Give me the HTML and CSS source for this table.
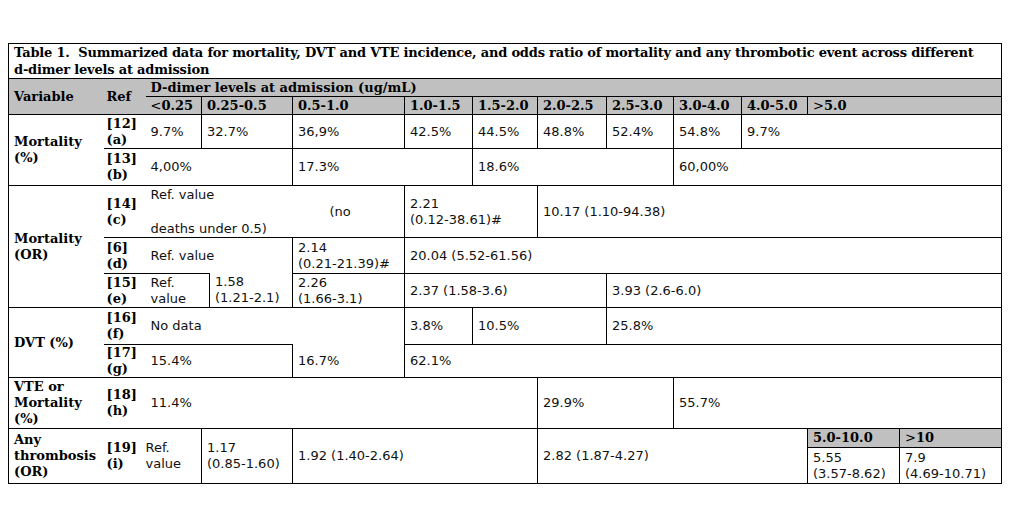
FILE: index.html
```html
<!DOCTYPE html>
<html>
<head>
<meta charset="utf-8">
<link rel="stylesheet" href="styles.css">
<title>Table 1</title>
</head>
<body>
<div class="page">
<table class="tbl">
<colgroup>
<col class="w95"><col class="w42"><col class="w56"><col class="w8"><col class="w83"><col class="w112"><col class="w68"><col class="w65"><col class="w69"><col class="w67"><col class="w68"><col class="w66"><col class="w92"><col class="w102">
</colgroup>
<tr class="r-title">
<td class="title" colspan="14">Table 1.&nbsp; Summarized data for mortality, DVT and VTE incidence, and odds ratio of mortality and any thrombotic event across different<br>d-dimer levels at admission</td>
</tr>
<tr class="r-h1 hd">
<th class="var" rowspan="2">Variable</th>
<th class="ref" rowspan="2">Ref</th>
<th class="dd f" colspan="12">D-dimer levels at admission (ug/mL)</th>
</tr>
<tr class="r-h2 hd">
<th class="f"><span class="lt">&lt;</span>0.25</th>
<th colspan="2">0.25-0.5</th>
<th>0.5-1.0</th>
<th>1.0-1.5</th>
<th>1.5-2.0</th>
<th>2.0-2.5</th>
<th>2.5-3.0</th>
<th>3.0-4.0</th>
<th>4.0-5.0</th>
<th colspan="2"><span class="lt">&gt;</span>5.0</th>
</tr>
<tr class="r-a">
<td class="var" rowspan="2">Mortality<br>(%)</td>
<td class="ref">[12]<br>(a)</td>
<td class="f">9.7%</td>
<td colspan="2">32.7%</td>
<td>36,9%</td>
<td>42.5%</td>
<td>44.5%</td>
<td>48.8%</td>
<td>52.4%</td>
<td>54.8%</td>
<td colspan="3">9.7%</td>
</tr>
<tr class="r-b">
<td class="ref">[13]<br>(b)</td>
<td class="f" colspan="3">4,00%</td>
<td colspan="2">17.3%</td>
<td colspan="3">18.6%</td>
<td colspan="4">60,00%</td>
</tr>
<tr class="r-c">
<td class="var" rowspan="3">Mortality<br>(OR)</td>
<td class="ref">[14]<br>(c)</td>
<td class="f lines" colspan="4"><span class="ln">Ref. value</span><span class="ln no">(no</span><span class="ln">deaths under 0.5)</span></td>
<td colspan="2">2.21<br>(0.12-38.61)#</td>
<td colspan="6">10.17 (1.10-94.38)</td>
</tr>
<tr class="r-d">
<td class="ref">[6]<br>(d)</td>
<td class="f nb" colspan="3">Ref. value</td>
<td>2.14<br>(0.21-21.39)#</td>
<td colspan="8">20.04 (5.52-61.56)</td>
</tr>
<tr class="r-e">
<td class="ref">[15]<br>(e)</td>
<td class="f" colspan="2">Ref.<br>value</td>
<td class="nt">1.58<br>(1.21-2.1)</td>
<td>2.26<br>(1.66-3.1)</td>
<td colspan="3">2.37 (1.58-3.6)</td>
<td colspan="5">3.93 (2.6-6.0)</td>
</tr>
<tr class="r-f">
<td class="var" rowspan="2">DVT (%)</td>
<td class="ref">[16]<br>(f)</td>
<td class="f nb" colspan="4">No data</td>
<td>3.8%</td>
<td colspan="2">10.5%</td>
<td colspan="5">25.8%</td>
</tr>
<tr class="r-g">
<td class="ref">[17]<br>(g)</td>
<td class="f" colspan="3">15.4%</td>
<td class="nt">16.7%</td>
<td colspan="8">62.1%</td>
</tr>
<tr class="r-h">
<td class="var">VTE or<br>Mortality<br>(%)</td>
<td class="ref">[18]<br>(h)</td>
<td class="f" colspan="6">11.4%</td>
<td colspan="2">29.9%</td>
<td colspan="4">55.7%</td>
</tr>
<tr class="r-i1">
<td class="var" rowspan="2">Any<br>thrombosis<br>(OR)</td>
<td class="ref" rowspan="2">[19]<br>(i)</td>
<td class="f tight" rowspan="2">Ref.<br>value</td>
<td colspan="2" rowspan="2">1.17<br>(0.85-1.60)</td>
<td colspan="3" rowspan="2">1.92 (1.40-2.64)</td>
<td colspan="4" rowspan="2">2.82 (1.87-4.27)</td>
<th class="sub">5.0-10.0</th>
<th class="sub"><span class="lt">&gt;</span>10</th>
</tr>
<tr class="r-i2">
<td>5.55<br>(3.57-8.62)</td>
<td>7.9<br>(4.69-10.71)</td>
</tr>
</table>
</div>
</body>
</html>
```

FILE: styles.css
```css
html, body {
  margin: 0;
  padding: 0;
  background: #ffffff;
}

.page {
  padding: 43px 0 0 8px;
}

.tbl {
  border-collapse: collapse;
  table-layout: fixed;
  width: 994px;
  border: 1px solid #000;
  font-family: "DejaVu Sans", Verdana, sans-serif;
  font-size: 13px;
  line-height: 16px;
  color: #111;
}

.w95 { width: 95px; }
.w42 { width: 42px; }
.w56 { width: 56px; }
.w8 { width: 8px; }
.w83 { width: 83px; }
.w112 { width: 112px; }
.w68 { width: 68px; }
.w65 { width: 65px; }
.w69 { width: 69px; }
.w67 { width: 67px; }
.w66 { width: 66px; }
.w92 { width: 92px; }
.w102 { width: 102px; }

.tbl td,
.tbl th {
  border: 1px solid #000;
  padding: 0 3px 0 5px;
  vertical-align: middle;
  text-align: left;
  white-space: nowrap;
  overflow: hidden;
}

.tbl th,
.title,
.var,
.ref {
  font-family: "DejaVu Serif", "Liberation Serif", serif;
  font-weight: bold;
  font-size: 13px;
  color: #000;
}

.tbl .title {
  line-height: 17px;
  letter-spacing: -0.2px;
  padding: 0 0 0 5px;
}

.hd th {
  background: #c0c0c0;
  line-height: 16px;
}

.lt {
  font-weight: normal;
}

.tbl .var {
  border-right: none;
  padding-left: 5px;
  line-height: 16px;
}

.tbl .ref {
  border-left: none;
  border-right: none;
  padding-left: 3px;
  padding-right: 0;
  line-height: 16px;
}

.tbl .f {
  border-left: none;
}

.tbl .tight {
  padding-left: 0;
}

.tbl .nb {
  border-bottom: none;
}

.tbl .nt {
  border-top: none;
}

.tbl .sub {
  background: #c0c0c0;
  line-height: 16px;
}

.lines {
  line-height: 17px;
}

.ln {
  display: block;
}

.no {
  margin-left: 179px;
}

.r-title { height: 34px; }
.r-h1 { height: 18px; }
.r-h2 { height: 18px; }
.r-a { height: 34px; }
.r-b { height: 37px; }
.r-c { height: 52px; }
.r-d { height: 36px; }
.r-e { height: 34px; }
.r-f { height: 37px; }
.r-g { height: 33px; }
.r-h { height: 51px; }
.r-i1 { height: 19px; }
.r-i2 { height: 36px; }
```
